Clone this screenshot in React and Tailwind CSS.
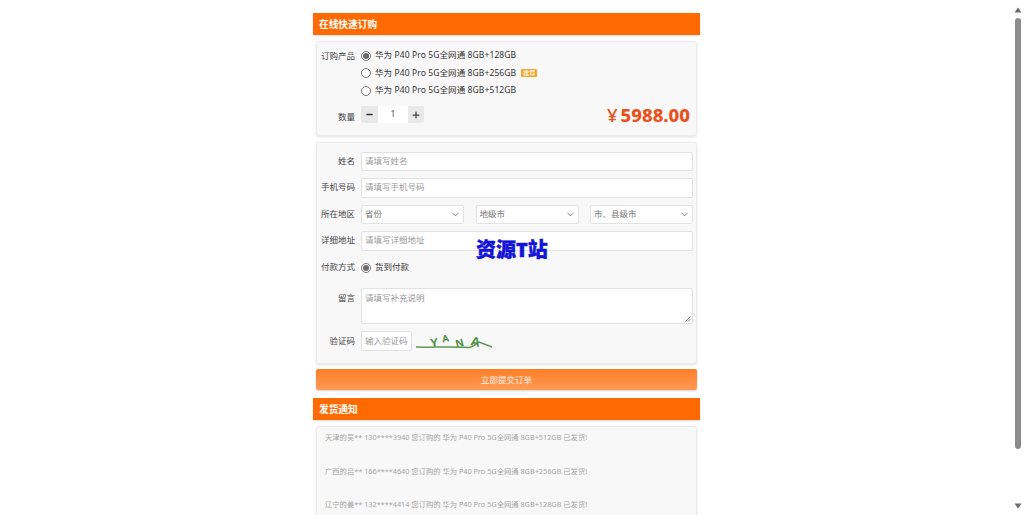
import { ChevronDown, Minus, Plus } from 'lucide-react';

const font = { fontFamily: '"Noto Sans", "Noto Sans CJK SC", sans-serif' };

const products = [
  { name: '华为 P40 Pro 5G全网通 8GB+128GB', checked: true },
  { name: '华为 P40 Pro 5G全网通 8GB+256GB', hot: true },
  { name: '华为 P40 Pro 5G全网通 8GB+512GB' },
];

const notices = [
  '天津的吴** 130****3940 您订购的 华为 P40 Pro 5G全网通 8GB+512GB 已发货!',
  '广西的吕** 166****4640 您订购的 华为 P40 Pro 5G全网通 8GB+256GB 已发货!',
  '辽宁的姜** 132****4414 您订购的 华为 P40 Pro 5G全网通 8GB+128GB 已发货!',
];

function Radio({ checked }) {
  return (
    <span className="w-[10px] h-[10px] shrink-0 rounded-full border border-[#767676] bg-white flex items-center justify-center">
      {checked && <span className="w-[6px] h-[6px] rounded-full bg-[#6b6b6b]" />}
    </span>
  );
}

function Label({ children, className = '' }) {
  return <div className={`w-[38px] shrink-0 text-right text-[8.5px] whitespace-nowrap text-[#444] ${className}`}>{children}</div>;
}

function Field({ placeholder }) {
  return (
    <div className="flex-1 h-full rounded-[2px] border border-[#e2e2e2] bg-white px-[3px] flex items-center text-[8.5px] text-[#9a9a9a]">
      {placeholder}
    </div>
  );
}

function Select({ value }) {
  return (
    <div className="flex-1 h-full rounded-[2px] border border-[#e2e2e2] bg-white pl-[3px] pr-[2px] flex items-center justify-between text-[8.5px] text-[#777]">
      {value}
      <ChevronDown size={11} strokeWidth={1.6} className="text-[#555]" />
    </div>
  );
}

function Row({ label, children }) {
  return (
    <div className="flex items-center gap-[6px] h-[19.5px]">
      <Label>{label}</Label>
      {children}
    </div>
  );
}

function SectionHeader({ children }) {
  return (
    <div className="h-[22px] bg-[#ff6a00] flex items-center px-[6px] pt-[2px] text-[9.7px] font-bold text-white shadow-[0_1px_2px_rgba(0,0,0,0.15)]">
      {children}
    </div>
  );
}

const cardClass = 'mx-[3px] rounded-[3px] border border-[#ececec] bg-[#f8f8f8] shadow-[0_1px_3px_rgba(0,0,0,0.12)]';

export default function App() {
  return (
    <div className="h-[515px] overflow-hidden flex bg-white" style={font}>
      <main className="relative w-[1013px] shrink-0">
        <div className="w-[387px] mx-auto pt-[13px]">
          <SectionHeader>在线快速订购</SectionHeader>

          <div className={`${cardClass} mt-[6px] h-[95px] pt-[5px] pr-[6px] text-[8.5px] text-[#333]`}>
            <div className="flex gap-[6px]">
              <Label className="h-[17.5px] leading-[17.5px]">订购产品</Label>
              <div>
                {products.map((p) => (
                  <div key={p.name} className="h-[17.5px] flex items-center gap-[4px] whitespace-nowrap">
                    <Radio checked={p.checked} />
                    <span className="tracking-[0.1px]">{p.name}</span>
                    {p.hot && (
                      <span className="ml-[1px] rounded-[1px] bg-[#f0a92e] px-[2px] text-[6px] leading-[8px] text-white">推荐</span>
                    )}
                  </div>
                ))}
              </div>
            </div>
            <div className="flex items-center gap-[6px] mt-[5px]">
              <Label className="pt-[5px]">数量</Label>
              <div className="flex h-[17px] w-[63px] rounded-[2px] bg-[#e8e8e8] overflow-hidden text-[8.5px]">
                <span className="w-[17px] flex items-center justify-center"><Minus size={9} strokeWidth={3.5} className="text-[#333]" /></span>
                <span className="flex-1 bg-white flex items-center justify-center text-[#555]">1</span>
                <span className="w-[16px] flex items-center justify-center"><Plus size={10} strokeWidth={3} className="text-[#444]" /></span>
              </div>
              <div className="ml-auto flex items-baseline text-[18.5px] leading-[20px] font-extrabold text-[#e8531d] whitespace-nowrap">
                <span className="mr-[3px] font-medium">¥</span>
                5988.00
              </div>
            </div>
          </div>

          <div className={`${cardClass} mt-[6px] h-[222px] pt-[8.5px] pr-[3px]`}>
            <div className="flex flex-col gap-[7px]">
              <Row label="姓名"><Field placeholder="请填写姓名" /></Row>
              <Row label="手机号码"><Field placeholder="请填写手机号码" /></Row>
              <Row label="所在地区">
                <div className="flex-1 h-full flex gap-[11.5px]">
                  <Select value="省份" />
                  <Select value="地级市" />
                  <Select value="市、县级市" />
                </div>
              </Row>
              <Row label="详细地址"><Field placeholder="请填写详细地址" /></Row>
            </div>
            <div className="flex items-center gap-[6px] h-[20px] mt-[7px]">
              <Label>付款方式</Label>
              <div className="flex items-center gap-[4px] text-[8.5px] text-[#333]">
                <Radio checked />
                货到付款
              </div>
            </div>
            <div className="flex gap-[6px] mt-[10px]">
              <Label className="pt-[4px]">留言</Label>
              <div className="relative flex-1 h-[36px] rounded-[2px] border border-[#e2e2e2] bg-white px-[3px] pt-[3px] text-[8.5px] text-[#9a9a9a]">
                请填写补充说明
                <svg className="absolute right-[1px] bottom-[1px]" width="6" height="6" viewBox="0 0 6 6">
                  <path d="M0.5 5.5 5.5 0.5M3 5.5 5.5 3" stroke="#666" strokeWidth="0.8" />
                </svg>
              </div>
            </div>
            <div className="flex items-center gap-[6px] h-[20px] mt-[7.5px]">
              <Label>验证码</Label>
              <div className="w-[51px] h-full rounded-[2px] border border-[#e2e2e2] bg-white flex items-center px-[3px] text-[8.5px] text-[#9a9a9a] whitespace-nowrap">
                输入验证码
              </div>
              <svg width="80" height="20" viewBox="0 0 80 20" className="-ml-[3px]">
                <path d="M1 16 C 15 16.5 35 15.5 54 16.5 C 58 16 62 12 64 11 L 77 16" fill="none" stroke="#5e9a4e" strokeWidth="1.5" />
                <text x="15" y="16" fontSize="12" fontWeight="700" fill="#4d8c3f" fontFamily="Liberation Sans" transform="rotate(-8 18 10)">Y</text>
                <text x="27" y="11" fontSize="10" fontWeight="700" fill="#4d8c3f" fontFamily="Liberation Sans" transform="rotate(-10 30 8)">A</text>
                <text x="40" y="16" fontSize="11" fontWeight="700" fill="#4d8c3f" fontFamily="Liberation Sans" transform="rotate(-15 44 10)">N</text>
                <text x="56" y="15" fontSize="13" fontWeight="700" fill="#4d8c3f" fontFamily="Liberation Sans" transform="rotate(12 60 10)">A</text>
              </svg>
            </div>
          </div>

          <button className="block w-[381px] mx-[3px] mt-[5px] h-[21px] pt-[1px] rounded-[2px] bg-gradient-to-b from-[#ff7d22] to-[#ff9a55] text-[8.5px] text-white/90 shadow-[0_1px_2px_rgba(0,0,0,0.2)]">
            立即提交订单
          </button>

          <div className="mt-[8px]">
            <SectionHeader>发货通知</SectionHeader>
          </div>

          <div className={`${cardClass} mt-[6px] h-[120px] px-[8px] pt-[5px] text-[7.3px] text-[#a5a5a5]`}>
            <div className="flex flex-col gap-[22px]">
              {notices.map((n) => (
                <div key={n} className="h-[11.5px] leading-[11.5px] whitespace-nowrap">{n}</div>
              ))}
            </div>
          </div>
        </div>

        <div className="absolute left-[476px] top-[237px] text-[20px] leading-[26px] font-black text-[#1414d8] whitespace-nowrap [-webkit-text-stroke:0.4px_#1414d8]">
          资源T站
        </div>
      </main>

      <div className="flex-1 bg-white flex flex-col items-center pt-[7px] pb-[6px] pr-[2px]">
        <svg width="8" height="6" viewBox="0 0 8 6"><path d="M4 0.5 7.5 5.5H0.5Z" fill="#6b6b6b" /></svg>
        <div className="w-[6px] h-[431px] mt-[5px] rounded-full bg-[#8c8c8c]" />
        <div className="flex-1" />
        <svg width="8" height="6" viewBox="0 0 8 6"><path d="M4 5.5 7.5 0.5H0.5Z" fill="#6b6b6b" /></svg>
      </div>
    </div>
  );
}
